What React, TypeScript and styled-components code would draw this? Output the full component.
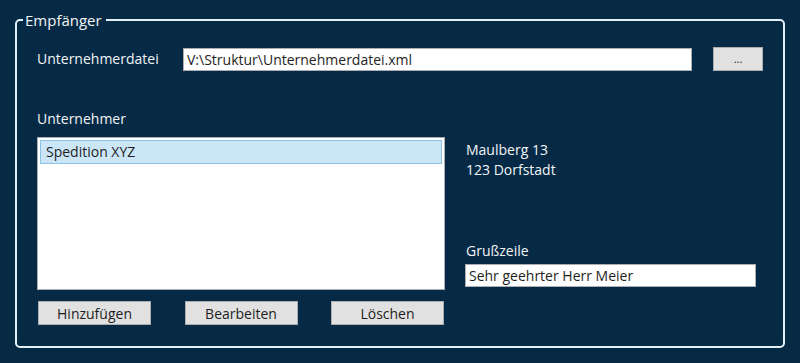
import React from "react";
import styled, { createGlobalStyle } from "styled-components";

const GlobalStyle = createGlobalStyle`
  html, body {
    margin: 0;
    padding: 0;
    background: #062a45;
  }
  body {
    width: 800px;
    height: 363px;
    overflow: hidden;
    font-family: "Open Sans", "Noto Sans", sans-serif;
    font-size: 14px;
    color: #f2f4f6;
  }
`;

const Page = styled.div`
  padding: 11px 15px 0 15px;
`;

const GroupBox = styled.fieldset`
  margin: 0;
  width: 770px;
  height: 337px;
  box-sizing: border-box;
  border: 2px solid #e3f0f8;
  border-radius: 5px;
  padding: 18px 0 0 20px;
`;

const Legend = styled.legend`
  margin-left: -14px;
  padding: 0 4px 0 2px;
  font-size: 15px;
  line-height: 18px;
  color: #f2f4f6;
`;

const FileRow = styled.div`
  display: flex;
  align-items: center;
`;

const Label = styled.div`
  line-height: 18px;
  white-space: nowrap;
`;

const FileLabel = styled(Label)`
  width: 146px;
`;

const TextBox = styled.input<{ $width: number }>`
  width: ${(p) => p.$width}px;
  height: 23px;
  box-sizing: border-box;
  border: 1px solid #abadb3;
  background: #fff;
  padding: 0 3px;
  font-family: inherit;
  font-size: 14px;
  color: #1e1e1e;
  outline: none;
`;

const Button = styled.button<{ $width: number }>`
  width: ${(p) => p.$width}px;
  height: 24px;
  box-sizing: border-box;
  border: 1px solid #adadad;
  background: #e1e1e1;
  font-family: inherit;
  font-size: 14px;
  color: #1e1e1e;
  padding: 0;
`;

const BrowseButton = styled(Button)`
  margin-left: 21px;
  font-size: 11px;
  line-height: 10px;
`;

const Section = styled.div`
  display: grid;
  grid-template-columns: 408px 291px;
  grid-template-rows: auto 153px auto;
  column-gap: 20px;
  margin-top: 39px;
`;

const ListLabel = styled(Label)`
  margin-bottom: 9px;
`;

const ListBox = styled.div`
  grid-column: 1;
  grid-row: 2;
  border: 1px solid #abadb3;
  background: #fff;
  padding: 2px 2px;
  box-sizing: border-box;
`;

const ListItem = styled.div<{ $selected?: boolean }>`
  height: 24px;
  box-sizing: border-box;
  padding: 0 5px;
  line-height: 22px;
  color: #1e1e1e;
  background: ${(p) => (p.$selected ? "#cbe6f7" : "transparent")};
  border: 1px solid ${(p) => (p.$selected ? "#8cc2e6" : "transparent")};
`;

const Details = styled.div`
  grid-column: 2;
  grid-row: 2;
  display: flex;
  flex-direction: column;
  justify-content: space-between;
  padding: 3px 0 3px 0;
`;

const Address = styled.div`
  padding-left: 1px;
  line-height: 20px;
`;

const GreetingLabel = styled(Label)`
  padding-left: 1px;
  margin-bottom: 4px;
`;

const ButtonRow = styled.div`
  grid-column: 1;
  grid-row: 3;
  display: flex;
  justify-content: space-between;
  padding: 0 1px;
  margin-top: 11px;
`;

export default function App() {
  return (
    <>
      <GlobalStyle />
      <Page>
        <GroupBox>
          <Legend>Empfänger</Legend>
          <FileRow>
            <FileLabel>Unternehmerdatei</FileLabel>
            <TextBox $width={509} readOnly value="V:\Struktur\Unternehmerdatei.xml" />
            <BrowseButton $width={50}>...</BrowseButton>
          </FileRow>
          <Section>
            <ListLabel>Unternehmer</ListLabel>
            <ListBox>
              <ListItem $selected>Spedition XYZ</ListItem>
            </ListBox>
            <Details>
              <Address>
                Maulberg 13
                <br />
                123 Dorfstadt
              </Address>
              <div>
                <GreetingLabel>Grußzeile</GreetingLabel>
                <TextBox $width={291} readOnly value="Sehr geehrter Herr Meier" />
              </div>
            </Details>
            <ButtonRow>
              <Button $width={113}>Hinzufügen</Button>
              <Button $width={113}>Bearbeiten</Button>
              <Button $width={113}>Löschen</Button>
            </ButtonRow>
          </Section>
        </GroupBox>
      </Page>
    </>
  );
}
